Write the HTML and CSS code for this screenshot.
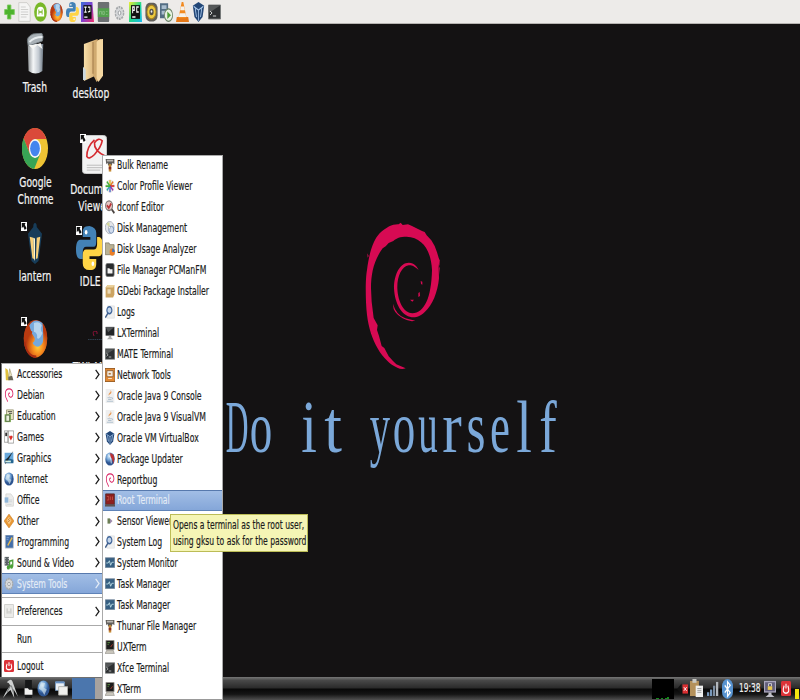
FILE: index.html
```
<!DOCTYPE html>
<html lang="en">
<head>
<meta charset="utf-8">
<title>Desktop</title>
<link rel="stylesheet" href="styles.css">
</head>
<body>
<svg class="defs" aria-hidden="true">
<defs>
<linearGradient id="metal"><stop offset="0" stop-color="#8d9296"/><stop offset=".35" stop-color="#f4f6f7"/><stop offset=".7" stop-color="#c3cad2"/><stop offset="1" stop-color="#6f7a86"/></linearGradient>
<linearGradient id="tan"><stop offset="0" stop-color="#f8dfa9"/><stop offset="1" stop-color="#cfa468"/></linearGradient>
<radialGradient id="fox" cx=".6" cy=".7"><stop offset="0" stop-color="#ffd23c"/><stop offset=".45" stop-color="#f78b1e"/><stop offset="1" stop-color="#b83a10"/></radialGradient>
<linearGradient id="intellij" x2="1" y2="1"><stop offset="0" stop-color="#3b6fd8"/><stop offset=".5" stop-color="#7f3fd0"/><stop offset="1" stop-color="#f5306b"/></linearGradient>
<linearGradient id="pycharm" x2="1" y2="1"><stop offset="0" stop-color="#f5ef32"/><stop offset=".5" stop-color="#21d789"/><stop offset="1" stop-color="#16b8f0"/></linearGradient>
<radialGradient id="globe" cx=".4" cy=".3"><stop offset="0" stop-color="#d9ecfa"/><stop offset=".6" stop-color="#6a9cd0"/><stop offset="1" stop-color="#2d5490"/></radialGradient>
</defs>
<symbol id="i-plus" viewBox="0 0 16 16" preserveAspectRatio="none"><path d="M5 1h5v4.500h5v5h-5V15H5v-4.500H1v-5h4z" fill="#4db32c" stroke="#7ac95c"/></symbol>
<symbol id="i-doc" viewBox="0 0 16 16" preserveAspectRatio="none"><path d="M1 .5h10l4 3.500v11.500H1z" fill="#f5f5f4" stroke="#c9c9c6" stroke-width=".8"/><path d="M3.500 4h6M3.500 6h9M3.500 8h9M3.500 10h9M3.500 12h7" stroke="#d0d0ce" stroke-width=".9"/></symbol>
<symbol id="i-android" viewBox="0 0 16 16" preserveAspectRatio="none"><circle cx="8" cy="8" r="7.800" fill="#79b829"/><path d="M3.500 11.500V8Q3.500 3.800 8 3.800T12.500 8v3.500z" fill="#fff"/><path d="M6 6v4M10 6v4M6 8h4" stroke="#79b829" stroke-width="1.100"/></symbol>
<symbol id="i-firefox" viewBox="0 0 32 32" preserveAspectRatio="none"><circle cx="16" cy="16.500" r="15" fill="url(#fox)"/><path d="M8 6Q15-1 25 4Q29 13 25 20Q19 26 12 20Q17 18 14 15L11 12z" fill="#76a9dc"/><path d="M14 4q7-2 10 2-3 3 1 6-4 6-7 4 1-4-4-5z" fill="#b6d4ed"/><path d="M1 16Q2 8 7 5q1 5 5 6-2 3 1 5-3 4 2 7 6 3 11-3 0-10-1-16 5 3 6 12-1 15-16 15Q2 30 1 16z" fill="url(#fox)"/><path d="M2 19Q5 31 17 31" stroke="#a82c12" fill="none" stroke-width="2"/></symbol>
<symbol id="i-python" viewBox="0 0 32 32" preserveAspectRatio="none"><path d="M16 0C9 0 8 2 8 5v3h9v2H5C1 10 0 14 0 17s1 7 5 7h3v-5q0-4 4-4h9q3 0 3-4V5q0-4-8-5z" fill="#4382b6"/><path d="M16 32c7 0 8-2 8-5v-3h-8v-2h11c4 0 5-4 5-7s-1-7-5-7h-2v5q0 4-4 4h-9q-4 0-4 4v6q0 5 8 5z" fill="#ffd445"/><circle cx="12" cy="4.500" r="1.600" fill="#fff"/><circle cx="20" cy="27.500" r="1.600" fill="#fff"/></symbol>
<symbol id="i-idea" viewBox="0 0 16 16" preserveAspectRatio="none"><path d="M0 0h14l2 16H0z" fill="url(#intellij)"/><path d="M3 2.500h10v11H3z" fill="#111"/><path d="M4 4h3M5.500 4v4M4 8h3M8.500 4H11v3.500L8.500 8M4 12h4" stroke="#fff" fill="none"/></symbol>
<symbol id="i-ndk" viewBox="0 0 16 16" preserveAspectRatio="none"><rect x="1" width="14" height="16" rx="1" fill="#6c7072"/><path d="M1 5h14v7H1z" fill="#52a04d"/><path d="M3 10V7.500h2.500V10M7 7.500h2V10H7zM11 7.500h2M11 10h2" stroke="#86bd81" fill="none" stroke-width=".8"/></symbol>
<symbol id="i-gear" viewBox="0 0 16 16" preserveAspectRatio="none"><circle cx="8" cy="8" r="5.800" fill="#e3e4e5" stroke="#a7aaac" stroke-width="2.500" stroke-dasharray="2.600 1"/><circle cx="8" cy="8" r="4.600" fill="#d5d7d9"/><circle cx="8" cy="8" r="2" fill="#fafafa" stroke="#8f9395"/></symbol>
<symbol id="i-pycharm" viewBox="0 0 16 16" preserveAspectRatio="none"><path d="M0 0h15l1 16H0z" fill="url(#pycharm)"/><path d="M2.500 2.500h11v11h-11z" fill="#111"/><path d="M4.500 9V4h2v2.500h-2M12 4H9.500v4H12M4 12h4" stroke="#fff" stroke-width="1.200" fill="none"/></symbol>
<symbol id="i-speaker" viewBox="0 0 16 16" preserveAspectRatio="none"><rect x=".5" y=".5" width="15" height="15" rx="5" fill="#62605b"/><circle cx="8" cy="8" r="5.500" fill="#edc93f" stroke="#aa851c"/><circle cx="8" cy="8" r="2.600" fill="#565149"/><circle cx="8" cy="7.500" r="1" fill="#eee"/></symbol>
<symbol id="i-play" viewBox="0 0 16 16" preserveAspectRatio="none"><path d="M0 1h10v12H0z" fill="#536d83"/><path d="M2 2.500h6v3H2zM2 7h6v3H2z" fill="#a9bdce"/><circle cx="10.500" cy="10.500" r="5" fill="#e8f1e3" stroke="#698066"/><path d="m9 7.500 4.500 3L9 13.500z" fill="#4c9f38"/></symbol>
<symbol id="i-vlc" viewBox="0 0 16 16" preserveAspectRatio="none"><path d="M1 12h14l1 4H0z" fill="#e67817"/><path d="M7 0h2l4 13H3z" fill="#f28a20"/><path d="m6 3.500-.9 3h5.800l-.9-3zM4.300 9l-.8 3h9l-.8-3z" fill="#f6f2eb"/></symbol>
<symbol id="i-vbox" viewBox="0 0 16 16" preserveAspectRatio="none"><path d="m8 0 7 3-2 9-5 4-5-4L1 3z" fill="#234777"/><path d="m2 3.500 6 3 6-3M8 6.500V15M4 5l1.500 7M12 5l-1.500 7" fill="none" stroke="#a7c6e9" stroke-width="1"/></symbol>
<symbol id="i-term" viewBox="0 0 16 16" preserveAspectRatio="none"><path d="M.5 1h15v14H.5z" fill="#2d3032" stroke="#777a7b"/><path d="M1 1.500h14L1 9z" fill="#555859"/><path d="m2.500 7 2.500 2-2.500 2M6 12h4" stroke="#e3e5e5" fill="none"/></symbol>
<symbol id="i-trash" viewBox="0 0 22 42" preserveAspectRatio="none"><path d="M2 11h18l-1 27q-8 5-16 0z" fill="url(#metal)"/><path d="M2 10Q0 4 8 1l10-1q3 3 1 8L3 13z" fill="#a8b0b6" stroke="#6f777d"/><path d="M4 9Q9 4 19 4" stroke="#e7ecef" stroke-width="2" fill="none"/><path d="m3 12 5 4 5-4 6 4-2-6-7 2z" fill="#f6f6f4"/></symbol>
<symbol id="i-folder" viewBox="0 0 22 42" preserveAspectRatio="none"><path d="M1 5 16 0v35L1 41z" fill="url(#tan)"/><path d="m0 27 3 3v10H0z" fill="#c9d7df"/><path d="m11 3 9-3v37l-5 5-4-7z" fill="#d0aa70"/><path d="M15 3q2-3 7-3v36l-5 6-2-4z" fill="#f5d7a1"/><path d="M11 3v31" stroke="#a98351" stroke-width="1.300"/></symbol>
<symbol id="i-chrome" viewBox="0 0 32 32" preserveAspectRatio="none"><circle cx="16" cy="16" r="16" fill="#efc334"/><path d="M2 8A16 16 0 0 1 30 8.500H16L9.500 20z" fill="#da493a"/><path d="M2 8A16 16 0 0 0 15 32l7.500-12L16 23.500 9.500 20z" fill="#37a455"/><circle cx="16" cy="16" r="7.500" fill="#f4f4f4"/><circle cx="16" cy="16" r="6" fill="#4485ee"/></symbol>
<symbol id="i-reader" viewBox="0 0 26 40" preserveAspectRatio="none"><rect x=".5" y=".5" width="25" height="39" rx="3" fill="#f2f2f2" stroke="#ccc"/><path d="M13 5Q5 12 5 22q2 4 8-2 7-8 8-14-4-4-8 2-1 8 12 14" fill="none" stroke="#d52a2f" stroke-width="1.700"/><path d="M5 31h18M5 33.500h18M5 36h14" stroke="#bbb"/></symbol>
<symbol id="i-lantern" viewBox="0 0 16 42" preserveAspectRatio="none"><path d="M6 4Q6 0 8 0t2 4l6 7-4 28-4 3-4-3L0 11z" fill="#173c59"/><path d="m2 14 4 1 1 22-2-1zM14 14l-4 1-1 22 2-1z" fill="#f7cf78"/><path d="m6 15 2 1v23L7 37z" fill="#fff5c5"/></symbol>
<symbol id="i-link" viewBox="0 0 8 10" preserveAspectRatio="none"><path d="M0 0h8v10H0z" fill="#fff"/><path d="M1 1h5L5 3l2.500 4L5 9 3 5 1 7z" fill="#111"/></symbol>
<symbol id="i-hammer" viewBox="0 0 16 16" preserveAspectRatio="none"><path d="M1 1h14v6l-3-1.500-1 3H5l-1-3-2 1.500z" fill="#605d5a"/><path d="M3 2h10v2H3z" fill="#bbb8b3"/><path d="M6 7h4v8.500H6z" fill="#c58b35"/><path d="M6 10h4v3H6z" fill="#8b2f24"/></symbol>
<symbol id="i-color" viewBox="0 0 16 16" preserveAspectRatio="none"><circle cx="8" cy="8" r="7.500" fill="#e8e8e5"/><path d="M8 1v7" stroke="#e5b820" stroke-width="2"/><path d="m13 3-5 5" stroke="#e37a24" stroke-width="2"/><path d="M15 8H8" stroke="#d93428" stroke-width="2"/><path d="m13 13-5-5" stroke="#9c30a8" stroke-width="2"/><path d="M8 15V8" stroke="#3759c5" stroke-width="2"/><path d="m3 13 5-5" stroke="#28a4ad" stroke-width="2"/><path d="M1 8h7M3 3l5 5" stroke="#43ae39" stroke-width="2"/></symbol>
<symbol id="i-dconf" viewBox="0 0 16 16" preserveAspectRatio="none"><path d="m10 10 5 5" stroke="#4c4542" stroke-width="2.500"/><circle cx="6.500" cy="6.500" r="5.500" fill="#e7c7c4" stroke="#77716f" stroke-width="1.600"/><path d="m3 6 3 3 4-5" fill="none" stroke="#b83436" stroke-width="2.500"/></symbol>
<symbol id="i-disk" viewBox="0 0 16 16" preserveAspectRatio="none"><circle cx="7.500" cy="7.500" r="7" fill="#e3e5e9" stroke="#9fa4ad"/><path d="M7.500 7.500 2 3l5-2z" fill="#d4d79a"/><circle cx="10" cy="10" r="4" fill="#d1dcec" stroke="#6482ad"/><circle cx="7" cy="7.500" r="1.500" fill="#fff" stroke="#888" stroke-width=".7"/></symbol>
<symbol id="i-usage" viewBox="0 0 16 16" preserveAspectRatio="none"><path d="M.5 1h6l1 2h7v11.500H.5z" fill="#b9b295" stroke="#7f7a62"/><circle cx="11.500" cy="11.500" r="4.200" fill="#eb7e25"/><path d="M11.500 11.500V7.300a4.200 4.200 0 0 1 4 4.200z" fill="#3e74bd"/></symbol>
<symbol id="i-pcman" viewBox="0 0 16 16" preserveAspectRatio="none"><rect x="1.500" y=".5" width="13" height="15" rx="2" fill="#292b2d" stroke="#6c6f70"/><path d="M4 6h3l1 1h4v5H4z" fill="#f3f3f3"/></symbol>
<symbol id="i-folderdark" viewBox="0 0 16 22" preserveAspectRatio="none"><path d="M2 0h12v22H2z" fill="#161718"/><path d="M1 10h6l2 2h6v6H1z" fill="#f0f0ef"/></symbol>
<symbol id="i-box" viewBox="0 0 16 16" preserveAspectRatio="none"><path d="m1 4 3-3h11v11l-2 3.500H1z" fill="#cca462"/><path d="m1 4 3-3h11l-2 3z" fill="#ead09b"/><path d="M4 6h5v5H4z" fill="#ead9b6"/></symbol>
<symbol id="i-log" viewBox="0 0 16 16" preserveAspectRatio="none"><path d="M4 1h11v14H3z" fill="#eeeff0" stroke="#dfe0e1"/><circle cx="7" cy="6" r="4" fill="#c3d5ea" stroke="#43679b" stroke-width="1.800"/><path d="m4.500 9.500-4 5" stroke="#3c5b88" stroke-width="2"/></symbol>
<symbol id="i-monitor" viewBox="0 0 16 16" preserveAspectRatio="none"><path d="M1 1h14v10H1z" fill="#242628"/><path d="M1 1h14L5 7z" fill="#545759"/><path d="M6 11h4v2l3 2H3l3-2z" fill="#aaa"/></symbol>
<symbol id="i-net" viewBox="0 0 16 16" preserveAspectRatio="none"><rect x=".5" y=".5" width="15" height="15" fill="#e38a33" stroke="#96571c"/><path d="M3 3h10v7H3z" fill="#eee6d7" stroke="#81522a"/><path d="M5 5h5v3H5zM5 12h6" fill="#b87632" stroke="#fff"/></symbol>
<symbol id="i-java" viewBox="0 0 16 16" preserveAspectRatio="none"><path d="M1 0h14v16H1z" fill="#efefef"/><path d="M9 1Q12 4 8 6t0 3Q4 7 7 4.500 10 3 9 1z" fill="#e89a55"/><path d="M4 10h7M5 12h5M3 14h10M11 10q3 0 0 2" stroke="#9db3c5" fill="none"/></symbol>
<symbol id="i-update" viewBox="0 0 16 16" preserveAspectRatio="none"><circle cx="8" cy="8" r="7.500" fill="url(#globe)"/><path d="M8 1q7 1 7 7l-2 6q-1-7-4-8z" fill="#bd3032"/><path d="M5 3q5 2 5 10" stroke="#fff" fill="none"/></symbol>
<symbol id="i-swirl" viewBox="0 0 16 16" preserveAspectRatio="none"><path d="M6 15.500C0 9 1 1 8 1c8 0 8 10 2 9.500C6 9 7 5 9.500 6" stroke="#d92463" stroke-width="1.300" fill="none"/></symbol>
<symbol id="i-root" viewBox="0 0 16 16" preserveAspectRatio="none"><path d="M1 1h14v12H1z" fill="#8e1f1e" stroke="#4f2424"/><path d="M3 4h3v4H3M9 4v4M12 4v4" stroke="#c8574c" fill="none"/><path d="M0 13h16v2.500H0z" fill="#5f5350"/></symbol>
<symbol id="i-sensor" viewBox="0 0 16 16" preserveAspectRatio="none"><path d="M4 5h4v6H4z" fill="#6c7e55"/><path d="m8 5 4 3-4 3z" fill="#9c8bab"/></symbol>
<symbol id="i-pulse" viewBox="0 0 16 16" preserveAspectRatio="none"><path d="M.5 1h15v13H.5z" fill="#365f82" stroke="#6e8294"/><path d="M2 8h3l2-3 2 6 2-4h3" stroke="#c5e4eb" fill="none" stroke-width="1.200"/></symbol>
<symbol id="i-xterm" viewBox="0 0 16 16" preserveAspectRatio="none"><path d="M1.500 .5h13v10.500h-13z" fill="#1d1c1b" stroke="#96938b"/><path d="M4 3h4M4 5h2" stroke="#68ad4b"/><path d="m9 8 3-3" stroke="#c84032"/><path d="m3 11.500h10l2 4H0z" fill="#c8c5bb" stroke="#77746d" stroke-width=".6"/></symbol>
<symbol id="i-access" viewBox="0 0 16 16" preserveAspectRatio="none"><path d="m2 1 4 2 3 12H3z" fill="#e1c13d"/><path d="m9 2 3 7-5 5z" fill="#ede8c9" stroke="#aaa278"/><path d="m7 11 6-1 2 5H7z" fill="#686657"/></symbol>
<symbol id="i-edu" viewBox="0 0 16 16" preserveAspectRatio="none"><path d="M4 1h11v11H4z" fill="#e9e7c8" stroke="#8b8a62"/><path d="M1 6h10v9H1z" fill="#7ba850"/><path d="M3 7h6v7H3z" fill="#e9f0db" stroke="#465d39"/><path d="M6 3h7M8 5h5" stroke="#222"/></symbol>
<symbol id="i-games" viewBox="0 0 16 16" preserveAspectRatio="none"><path d="M.5 1h6v13h-6zM6.500 1h9v14h-9z" fill="#fff" stroke="#8e8e8b"/><path d="M2 3h3v4H2z" fill="#333"/><path d="m11 12-3-4q1-3 3-1 2-2 3 1z" fill="#dc302b"/></symbol>
<symbol id="i-graphics" viewBox="0 0 16 16" preserveAspectRatio="none"><path d="M1 2h14v11H1z" fill="#68a8db"/><path d="m1 10 5-2 9 2v4H1z" fill="#266692"/><path d="M15 0 6 11l-4 4 1-5z" fill="#222c31"/><path d="M2 12h9" stroke="#d6efe5" stroke-width="2"/></symbol>
<symbol id="i-globe" viewBox="0 0 16 16" preserveAspectRatio="none"><circle cx="8" cy="8" r="7.500" fill="url(#globe)"/><path d="m5 2 5 1-2 4 4 2-3 5-3-4-4-2z" fill="#d7e8ef" opacity=".65"/></symbol>
<symbol id="i-office" viewBox="0 0 16 16" preserveAspectRatio="none"><path d="M3 1h8l4 4v10H3z" fill="#ececeb" stroke="#d1d1cf"/><path d="M1 5h6v6H1z" fill="#8fb6d9"/><path d="M8 8h5M8 10h5M5 13h7" stroke="#c8ced2"/></symbol>
<symbol id="i-other" viewBox="0 0 16 16" preserveAspectRatio="none"><path d="m8 0 8 8-8 8-8-8z" fill="#e99835" stroke="#c57418" stroke-width=".6"/><path d="m8 3 4 4-4 5-4-5z" fill="#f8c986"/><path d="m6 7 3-2M6 9l4-2" stroke="#b96f20"/></symbol>
<symbol id="i-prog" viewBox="0 0 16 16" preserveAspectRatio="none"><path d="M2 0h13v15H2z" fill="#426eaa" stroke="#c6c8c8"/><path d="m13 3-7 9" stroke="#e7ba4e" stroke-width="2"/><path d="M4 3h4M4 5h3" stroke="#89aadb"/></symbol>
<symbol id="i-media" viewBox="0 0 16 16" preserveAspectRatio="none"><path d="M1 1h7v10H1z" fill="#596164"/><path d="M2 2v8M7 2v8" stroke="#ddd" stroke-dasharray="1.500"/><path d="M9 13V6l5-1v7" stroke="#4b9f38" stroke-width="2" fill="none"/><circle cx="7" cy="13" r="2.500" fill="#4b9f38"/><circle cx="12" cy="12" r="2.500" fill="#4b9f38"/></symbol>
<symbol id="i-pref" viewBox="0 0 16 16" preserveAspectRatio="none"><rect x=".5" y=".5" width="15" height="15" rx="1" fill="#ebebe9" stroke="#c2c2be"/><path d="M5 5v6M11 5v6M8 8v3" stroke="#b5b5b1"/></symbol>
<symbol id="i-power" viewBox="0 0 16 16" preserveAspectRatio="none"><rect width="16" height="16" rx="2" fill="#db3238"/><path d="M5 5Q1 13 8 13t3-8M8 3v5" stroke="#fff" fill="none" stroke-width="1.700"/></symbol>
<symbol id="i-bird" viewBox="0 0 16 18" preserveAspectRatio="none"><path d="M4 3q4-4 6-1l6 14-5-7 1 8-4-7-3 2-5 5q4-8 8-11-2-3-4-3z" fill="#ced0d0"/><path d="M8 6l-4 6M9 6l2 6" stroke="#75797a"/></symbol>
<symbol id="i-windows" viewBox="0 0 16 16" preserveAspectRatio="none"><path d="M.5 1h11v9H.5z" fill="#ecf0f4" stroke="#7193b8"/><path d="M4.500 6h11v9h-11z" fill="#f0f0ed" stroke="#afafa9"/><path d="M.5 1.500h11" stroke="#6791c4" stroke-width="2"/></symbol>
<symbol id="i-clip" viewBox="0 0 16 20" preserveAspectRatio="none"><path d="M0 2h11v16H0z" fill="#b4915b"/><path d="M3 0h5v4H3z" fill="#c9c9c4"/><path d="M7 7h9v12H7z" fill="#efefed"/><path d="M9 10h5M9 12h5M9 14h5" stroke="#999"/></symbol>
<symbol id="i-bars" viewBox="0 0 16 16" preserveAspectRatio="none"><path d="M0 12h3v4H0zM4 9h3v7H4z" fill="#7898ba"/><path d="M8 5h3v11H8z" fill="#7d8ea1"/><path d="M12 1h3v15h-3z" fill="#b2b7bc"/></symbol>
<symbol id="i-bt" viewBox="0 0 16 22" preserveAspectRatio="none"><rect width="16" height="22" rx="8" fill="#5793d0"/><path d="m4 7 8 8-4 4V3l4 4-8 8" fill="none" stroke="#fff" stroke-width="1.600"/></symbol>
<symbol id="i-lock" viewBox="0 0 16 20" preserveAspectRatio="none"><path d="M0 1h16v13H0z" fill="#aaa6bd"/><path d="M1.500 2.500h13v10h-13z" fill="#625d7a"/><path d="M6 7V4h4v3" stroke="#ddd" fill="none"/><path d="M5 7h6v4H5z" fill="#e9c850"/><path d="M6 14h4v2l4 3H2l4-3z" fill="#c1c0c8"/></symbol>
<symbol id="i-arrow" viewBox="0 0 6 12" preserveAspectRatio="none"><path d="m.8 1 4 5-4 5" fill="none" stroke="currentColor" stroke-width="1.500"/></symbol>
</svg>

<main class="screen">
  <nav class="launcher">
    <svg><use href="#i-plus"/></svg><svg><use href="#i-doc"/></svg><svg><use href="#i-android"/></svg><svg><use href="#i-firefox"/></svg><svg><use href="#i-python"/></svg><svg><use href="#i-idea"/></svg><svg><use href="#i-ndk"/></svg><svg><use href="#i-gear"/></svg><svg><use href="#i-pycharm"/></svg><svg><use href="#i-speaker"/></svg><svg><use href="#i-play"/></svg><svg><use href="#i-vlc"/></svg><svg><use href="#i-vbox"/></svg><svg><use href="#i-term"/></svg>
  </nav>

  <section class="desktop">
    <svg class="swirl" viewBox="0 0 330 510"><path d="M167 475C158 478 150 477 142 473C98 454 60 392 51 315C46 270 46 205 51 180C57 130 70 90 89 70C108 52 128 42 146 43L152 38L158 45L174 43L186 48L204 57L216 63L224 66L230 76L244 91L254 108L261 127L268 150L266 172L267 205C263 247 247 287 225 305C210 320 198 322 185 322C155 318 134 280 132 235C132 190 152 157 177 158C193 159 201 169 206 180C192 168 185 165 176 166C155 169 141 200 142 235C144 278 162 309 187 310C224 308 244 263 246 180C243 119 216 82 170 80C150 80 139 84 130 93L116 99L107 109L98 115C72 150 63 190 63 235L65 275L71 324L83 346L81 360L87 378L95 408L103 414L116 439L129 453L139 463Z"/><path d="M129 282q10 34 37 43l30 7q-17 5-38-7-30-16-29-43m51-13h12l-5 6zm25-20 4-3 1 12-5 3zm7-36 5 2v9l-4-2zM260 140l9 10-2 45 3-20M52 130l4 8-3 5z"/></svg>
    <div class="motto"><span class="d">D</span><span class="o">o</span><span> </span><span class="i">i</span><span class="t">t</span><span> </span><span class="y">y</span><span class="o">o</span><span class="u">u</span><span class="r">r</span><span class="s">s</span><span class="e">e</span><span class="l">l</span><span class="f">f</span></div>

    <svg class="ico trash"><use href="#i-trash"/></svg><p class="cap c-trash"><span>Trash</span></p>
    <svg class="ico folder"><use href="#i-folder"/></svg><p class="cap c-folder"><span>desktop</span></p>
    <svg class="ico chrome"><use href="#i-chrome"/></svg><p class="cap c-chrome"><span>Google<br>Chrome</span></p>
    <svg class="ico reader"><use href="#i-reader"/></svg><svg class="ico link k1"><use href="#i-link"/></svg><p class="cap c-reader"><span>Document<br>Viewer</span></p>
    <svg class="ico lantern"><use href="#i-lantern"/></svg><svg class="ico link k2"><use href="#i-link"/></svg><p class="cap c-lantern"><span>lantern</span></p>
    <svg class="ico idle"><use href="#i-python"/></svg><svg class="ico link k3"><use href="#i-link"/></svg><p class="cap c-idle"><span>IDLE</span></p>
    <svg class="ico fox"><use href="#i-firefox"/></svg><svg class="ico link k4"><use href="#i-link"/></svg>
    <svg class="ico mini" viewBox="0 0 14 10"><path d="M6 5Q4 0 7 0t2 3" stroke="#8a1238" fill="none"/><path d="M0 8.500h14" stroke="#31404f" stroke-dasharray="1.500 .7"/></svg>
    <p class="cap c-wlan"><span>TWLAN</span></p>
  </section>

  <footer class="panel">
    <svg class="p-bird"><use href="#i-bird"/></svg><svg class="p-file"><use href="#i-folderdark"/></svg><svg class="p-globe"><use href="#i-globe"/></svg><svg class="p-win"><use href="#i-windows"/></svg>
    <div class="pager"><i></i><i></i></div>
    <div class="tray">
      <svg class="cpu" viewBox="0 0 22 20"><path d="M0 0h22v20H0z" fill="#000"/><path d="M4 20v-1h3v1zm5 0v-1h2v1zm4 0v-1h2v-1h2v2z" fill="#158a1c"/></svg>
      <svg class="mute" viewBox="0 0 12 12"><path d="M5 0v12L0 6z" fill="#111"/><path d="M6 1h6v10H6z" fill="#d92e31"/><path d="m7.500 4 3 4m0-4-3 4" stroke="#fff"/></svg>
      <svg class="t-clip"><use href="#i-clip"/></svg><svg class="t-bars"><use href="#i-bars"/></svg><svg class="t-bt"><use href="#i-bt"/></svg>
      <span class="clock"><span>19:38</span></span>
      <svg class="t-lock"><use href="#i-lock"/></svg><svg class="t-power"><use href="#i-power"/></svg><i class="battery"></i>
    </div>
  </footer>

  <ul class="menu main">
    <li><svg><use href="#i-access"/></svg><span>Accessories</span><svg class="arrow"><use href="#i-arrow"/></svg></li>
    <li><svg><use href="#i-swirl"/></svg><span>Debian</span><svg class="arrow"><use href="#i-arrow"/></svg></li>
    <li><svg><use href="#i-edu"/></svg><span>Education</span><svg class="arrow"><use href="#i-arrow"/></svg></li>
    <li><svg><use href="#i-games"/></svg><span>Games</span><svg class="arrow"><use href="#i-arrow"/></svg></li>
    <li><svg><use href="#i-graphics"/></svg><span>Graphics</span><svg class="arrow"><use href="#i-arrow"/></svg></li>
    <li><svg><use href="#i-globe"/></svg><span>Internet</span><svg class="arrow"><use href="#i-arrow"/></svg></li>
    <li><svg><use href="#i-office"/></svg><span>Office</span><svg class="arrow"><use href="#i-arrow"/></svg></li>
    <li><svg><use href="#i-other"/></svg><span>Other</span><svg class="arrow"><use href="#i-arrow"/></svg></li>
    <li><svg><use href="#i-prog"/></svg><span>Programming</span><svg class="arrow"><use href="#i-arrow"/></svg></li>
    <li><svg><use href="#i-media"/></svg><span>Sound &amp; Video</span><svg class="arrow"><use href="#i-arrow"/></svg></li>
    <li class="on"><svg><use href="#i-gear"/></svg><span>System Tools</span><svg class="arrow"><use href="#i-arrow"/></svg></li>
    <li class="sep"></li>
    <li><svg><use href="#i-pref"/></svg><span>Preferences</span><svg class="arrow"><use href="#i-arrow"/></svg></li>
    <li class="sep"></li>
    <li><svg></svg><span>Run</span></li>
    <li class="sep"></li>
    <li><svg class="small"><use href="#i-power"/></svg><span>Logout</span></li>
  </ul>

  <ul class="menu sub">
    <li><svg><use href="#i-hammer"/></svg><span>Bulk Rename</span></li>
    <li><svg><use href="#i-color"/></svg><span>Color Profile Viewer</span></li>
    <li><svg><use href="#i-dconf"/></svg><span>dconf Editor</span></li>
    <li><svg><use href="#i-disk"/></svg><span>Disk Management</span></li>
    <li><svg><use href="#i-usage"/></svg><span>Disk Usage Analyzer</span></li>
    <li><svg><use href="#i-pcman"/></svg><span>File Manager PCManFM</span></li>
    <li><svg><use href="#i-box"/></svg><span>GDebi Package Installer</span></li>
    <li><svg><use href="#i-log"/></svg><span>Logs</span></li>
    <li><svg><use href="#i-monitor"/></svg><span>LXTerminal</span></li>
    <li><svg class="small"><use href="#i-term"/></svg><span>MATE Terminal</span></li>
    <li><svg><use href="#i-net"/></svg><span>Network Tools</span></li>
    <li><svg><use href="#i-java"/></svg><span>Oracle Java 9 Console</span></li>
    <li><svg><use href="#i-java"/></svg><span>Oracle Java 9 VisualVM</span></li>
    <li><svg><use href="#i-vbox"/></svg><span>Oracle VM VirtualBox</span></li>
    <li><svg><use href="#i-update"/></svg><span>Package Updater</span></li>
    <li><svg><use href="#i-swirl"/></svg><span>Reportbug</span></li>
    <li class="on"><svg><use href="#i-root"/></svg><span>Root Terminal</span></li>
    <li><svg><use href="#i-sensor"/></svg><span>Sensor Viewer</span></li>
    <li><svg><use href="#i-log"/></svg><span>System Log</span></li>
    <li><svg class="small"><use href="#i-pulse"/></svg><span>System Monitor</span></li>
    <li><svg class="small"><use href="#i-pulse"/></svg><span>Task Manager</span></li>
    <li><svg class="small"><use href="#i-pulse"/></svg><span>Task Manager</span></li>
    <li><svg><use href="#i-hammer"/></svg><span>Thunar File Manager</span></li>
    <li><svg><use href="#i-xterm"/></svg><span>UXTerm</span></li>
    <li><svg class="small"><use href="#i-term"/></svg><span>Xfce Terminal</span></li>
    <li><svg><use href="#i-xterm"/></svg><span>XTerm</span></li>
  </ul>

  <div class="tip"><span>Opens a terminal as the root user,<br>using gksu to ask for the password</span></div>
</main>
</body>
</html>
```
FILE: styles.css
```
* { box-sizing: border-box; }
body { margin: 0; font-family: "DejaVu Sans", sans-serif; font-size: 12px; color: #1c1c1c; }
.defs { position: absolute; width: 0; height: 0; }
.screen { position: relative; display: flex; flex-direction: column; width: 800px; height: 700px; overflow: hidden; background: #141213; }
svg { display: block; flex: none; }

.launcher { display: flex; align-items: center; gap: 2.8px; height: 24px; padding: 0 3.500px; background: #edebe9; border-bottom: 1px solid #b7b4b1; }
.launcher svg { width: 13px; height: 20px; }
.launcher svg:first-child, .launcher svg:last-child { height: 16px; }
.launcher svg:first-child { width: 11px; margin-right: 1px; }
.launcher svg:nth-child(8) { width: 11px; height: 16px; margin: 3px 1px 0; }

.desktop { flex: 1; }
.ico, .cap, .swirl, .motto { position: absolute; }
.swirl { left: 350px; top: 210px; width: 110px; height: 170px; fill: #d70a53; }
.motto { left: 225px; top: 384px; display: grid; grid-template-columns: repeat(14, 23.900px); font: 75px/85px "Liberation Serif", serif; color: #7ba8d9; }
.motto span { display: flex; justify-content: center; width: 24px; transform: scaleX(.6); }
.motto .d { transform: scaleX(.42); }
.motto .i, .motto .l { transform: scaleX(.75); }
.motto .r { transform: scaleX(.78); }
.motto .t { transform: scaleX(.85); }
.motto .y { transform: scaleX(.54); }
.motto .u { transform: scaleX(.52); }
.motto .s { transform: scaleX(.65); }
.motto .f { transform: scaleX(.7); }

.cap { width: 80px; margin: 0; text-align: center; color: #f4f4f4; font-size: 13.500px; line-height: 17px; }
.cap span { display: inline-block; transform: scaleX(.68); -webkit-text-stroke: .2px; }
.trash { left: 26px; top: 33px; width: 19px; height: 42px; }
.c-trash { left: -5px; top: 79px; }
.folder { left: 83px; top: 39px; width: 20px; height: 43px; }
.c-folder { left: 51px; top: 85px; }
.chrome { left: 22px; top: 128px; width: 26px; height: 41px; }
.c-chrome { left: -5px; top: 174px; }
.reader { left: 82px; top: 135px; width: 25px; height: 39px; }
.c-reader { left: 54px; top: 181px; }
.lantern { left: 28px; top: 223px; width: 14px; height: 41px; }
.c-lantern { left: -5px; top: 268px; }
.idle { left: 76px; top: 226px; width: 27px; height: 44px; }
.c-idle { left: 50px; top: 273px; }
.fox { left: 23px; top: 318px; width: 25px; height: 40px; }
.mini { left: 88px; top: 331px; width: 14px; height: 10px; }
.c-wlan { left: 49px; top: 358.500px; }
.link { width: 6px; height: 9px; }
.k1 { left: 80px; top: 134px; }
.k2 { left: 21px; top: 222px; }
.k3 { left: 76px; top: 226px; }
.k4 { left: 21px; top: 317px; }

.menu { position: absolute; margin: 0; padding: 0; list-style: none; background: #fff; }
.menu li { display: flex; align-items: center; gap: 3px; height: 20.950px; padding-left: 2px; line-height: 20px; white-space: nowrap; }
.menu li > svg { width: 10px; height: 14px; }
.menu li > svg.small { width: 10px; height: 12px; }
.menu li > span { width: 80px; transform: scaleX(.645); transform-origin: left; -webkit-text-stroke: .2px; }
.menu .on { color: #e3ebf6; background: linear-gradient(#a3bfe6, #83a5d8); box-shadow: inset 0 1px #5779ad, inset 0 -1px #5f83b8; }
.main li > span { position: relative; left: -.5px; }
.menu li > .arrow { width: 5px; height: 11px; margin: 0 0 0 -5px; }
.main { left: 1px; top: 363px; width: 102px; height: 314px; border-top: 1px solid #aaa; border-left: 1px solid #777; }
.main .sep { height: 6.500px; padding: 0; background: linear-gradient(#aaa, #aaa) 0 50% / 100% 1px no-repeat; }
.sub { left: 102px; top: 155px; width: 121px; height: 545px; border-left: 1px solid #aaa; border-right: 1px solid #aaa; box-shadow: inset 0 1px #aaa, inset 0 -1px #999; }
.sub li > svg, .sub li > svg.small { margin-right: -1px; }

.tip { position: absolute; left: 170px; top: 514px; width: 138px; height: 38px; padding: 3px 2px; background: #f5f5b5; border: 1px solid #bcbc56; line-height: 15.500px; white-space: nowrap; }
.tip span { display: block; transform: scaleX(.637); transform-origin: left; -webkit-text-stroke: .2px; }

.panel { display: flex; align-items: center; height: 23px; padding-left: 3px; background: linear-gradient(#777 0, #484848 15%, #2a2a2a 48%, #080808 52%, #151515 75%, #505050 100%); }
.p-bird { width: 15px; height: 20px; }
.p-file { width: 9px; height: 18px; margin-left: 6px; }
.p-globe { width: 13px; height: 17px; margin-left: 4px; }
.p-win { width: 13px; height: 15px; margin-left: 5px; }
.pager { display: flex; height: 21px; margin-left: 4px; }
.pager i { width: 23px; background: #4b76ad; }
.pager i + i { background: #a7a29e; }
.tray { display: flex; align-items: center; height: 23px; margin-left: auto; padding-right: 1px; }
.cpu { width: 22px; height: 20px; margin-right: 3px; }
.mute { width: 11px; height: 12px; margin-right: 2px; }
.t-clip { width: 13px; height: 19px; margin-right: 4px; }
.t-bars { width: 12px; height: 15px; margin-right: 3px; }
.t-bt { width: 11px; height: 20px; margin-right: 6px; }
.clock { width: 22px; margin: 0 3px 2px 0; color: #f2f2f2; font-size: 12px; }
.clock span { display: inline-block; transform: scaleX(.62); transform-origin: left; -webkit-text-stroke: .2px; }
.t-lock { width: 12px; height: 18px; margin-right: 5px; }
.t-power { width: 10px; height: 15px; margin-right: 4px; }
.battery { width: 4px; height: 10px; align-self: flex-end; margin-bottom: 1px; background: #f4e411; }
```
